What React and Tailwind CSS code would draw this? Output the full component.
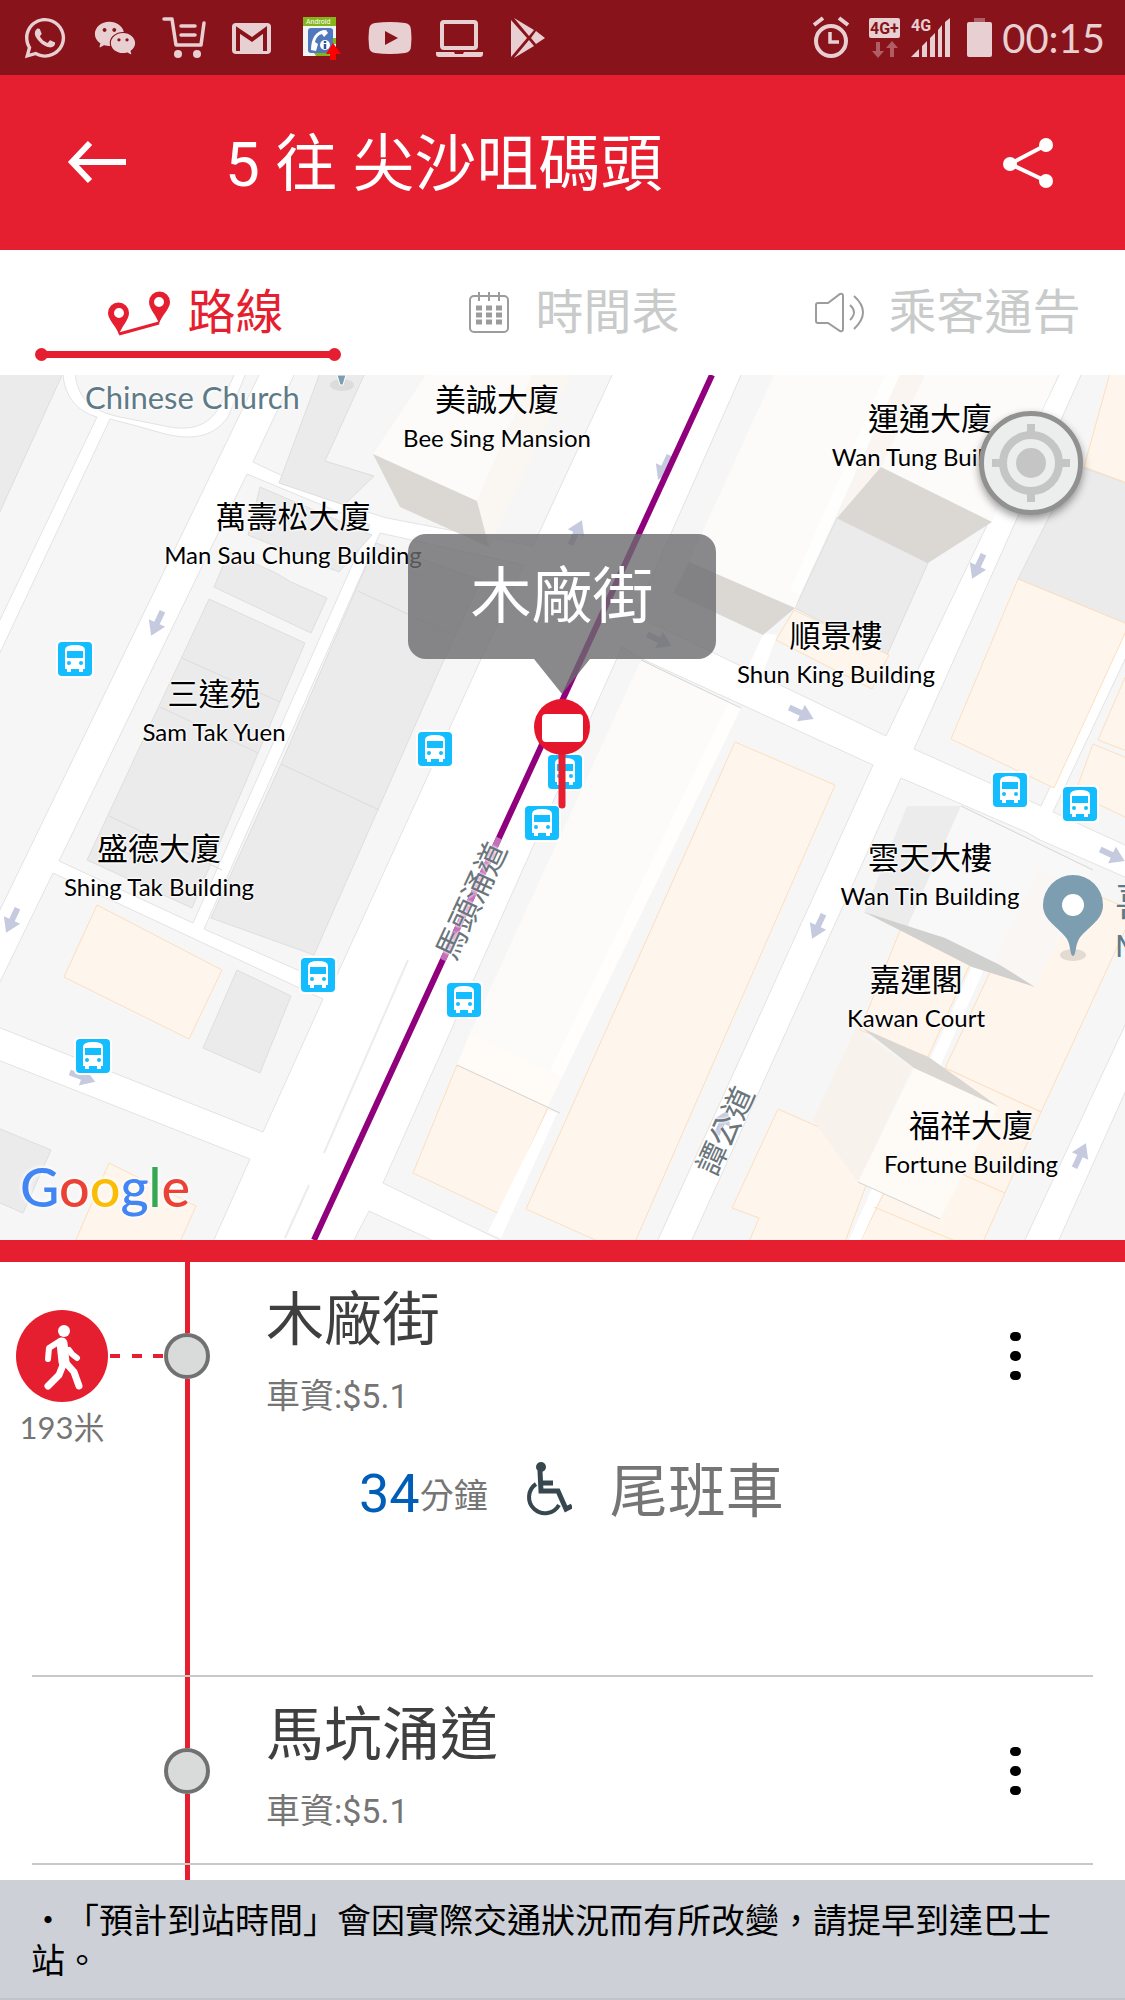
import { useState } from 'react';
import { FaWhatsapp } from 'react-icons/fa';
import { AiFillWechat } from 'react-icons/ai';

// fill / outline pairs used by the map polygons
const GROUND = { fill: '#f6f6f6', stroke: '#e3e3e3' };
const GREY = { fill: '#ebebeb', stroke: '#dedede' };
const PEACH = { fill: '#fef5ec', stroke: '#fddfbd' };

const blocks = [
  'M-2,-2 L63,-2 C64,20 76,36 97,42 L-2,249Z',
  'M75,-2 C78,25 92,36 120,42 L160,50 C200,60 215,45 225,20 L235,-2Z',
  'M110,44 L133,50 L158,57 C195,68 215,60 228,42 L246,-2 L260,-2 L-2,539 L-2,282Z',
  'M295,-2 L613,-2 L533,171 L387,143 L344,130 L253,87Z',
  'M247,99 L370,150 L193,548 L59,486Z',
  'M380,158 L524,190 L337,600 L300,596 L204,554Z',
  'M53,498 L323,624 L263,757 L-2,652 L-2,611Z',
  'M-2,685 L250,784 L213,867 L-2,867Z',
  'M742,-2 L1060,-2 L886,361 L635,240Z',
  'M1082,-2 L1127,-2 L1127,250 L1041,431 L914,374Z',
  'M1127,280 L1053,437 L1127,471Z',
  'M901,403 L1028,458 L1040,465 L1127,503 L1127,646 L1024,867 L691,867Z',
  'M1127,713 L1127,867 L1058,867Z',
  'M622,272 L640,283 L873,390 L657,867 L504,867 L383,808Z',
  'M369,836 L436,867 L353,867Z',
];

const greyBuildings = [
  'M-2,-2 L63,-2 L-2,141Z',
  'M320,-2 L365,-2 L325,86 L374,101 L344,130 L279,108Z',
  'M260,112 L372,160 L339,197 L248,160Z',
  'M229,177 L276,198 L291,207 L327,223 L311,258 L214,212Z',
  'M209,224 L305,268 L192,533 L87,485Z',
  'M376,168 L481,205 L443,287 L314,580 L211,543 L281,389Z',
  'M237,595 L291,621 L260,698 L203,673Z',
  'M-2,753 L51,775 L23,838 L-2,827Z',
  'M837,143 L928,188 L887,280 L795,233Z',
  'M1075,90 L1127,108 L1127,249 L1018,204Z',
];

const peachBuildings = [
  'M97,530 L222,595 L189,664 L64,602Z',
  'M109,788 L196,831 L180,867 L75,867Z',
  'M794,235 L889,280 L872,314 L776,265Z',
  'M1110,-2 L1127,-2 L1127,108 L1084,92Z',
  'M1018,204 L1127,249 L1127,254 L1054,413 L951,364Z',
  'M1127,298 L1098,365 L1127,376Z',
  'M1093,369 L1127,383 L1127,443 L1075,418Z',
  'M457,690 L548,732 L500,839 L413,798Z',
  'M735,367 L835,410 L635,867 L600,867 L526,834Z',
  'M901,553 L971,587 L928,682 L860,655Z',
  'M1038,495 L1127,533 L1127,551 L1041,737 L945,693Z',
  'M945,693 L1041,737 L983,867 L860,867Z',
  'M778,734 L878,778 L845,867 L749,867 L759,843 L732,833Z',
];

// tall buildings are drawn as a pale roof plus a darker side
const roofs = [
  { d: 'M426,0 L532,0 L477,126 L373,79Z', fill: '#fcfbf9' },
  { d: 'M532,0 L571,0 L489,172 L477,126Z', fill: '#faf6f1' },
  { d: 'M774,0 L885,0 L795,233 L689,187Z', fill: '#fcfbf9' },
  { d: 'M885,0 L900,0 L800,220 L790,215Z', fill: '#fefefd' },
  { d: 'M920,0 L1058,0 L992,147 L881,92Z', fill: '#fcfbf9' },
  { d: 'M900,0 L925,0 L881,92 L837,143Z', fill: '#faf5f0' },
  { d: 'M641,285 L741,333 L562,702 L470,658Z', fill: '#fcfbf9' },
  { d: 'M470,658 L562,702 L548,732 L457,690Z', fill: '#fffbf6' },
  { d: 'M729,326 L741,333 L562,702 L550,696Z', fill: '#fffefc' },
  { d: 'M907,431 L961,431 L908,553 L864,538Z', fill: '#ececec' },
  { d: 'M961,431 L1093,495 L1035,612 L908,550Z', fill: '#f8f8f8' },
  { d: 'M1038,495 L1078,514 L1035,612 L990,590Z', fill: '#faf6f3' },
  { d: 'M856,653 L912,693 L858,807 L813,745Z', fill: '#f8f2ed' },
  { d: 'M914,693 L998,732 L940,844 L858,807Z', fill: '#fefaf6' },
];

const shades = [
  { d: 'M373,79 L477,126 L489,172 L400,132Z', fill: '#dbd8d4' },
  { d: 'M881,92 L992,147 L928,188 L837,143Z', fill: '#dbd8d4' },
  { d: 'M689,187 L795,233 L763,260 L673,218Z', fill: '#dbd8d4' },
  { d: 'M864,537 L945,563 L1000,590 L1035,612 L972,592Z', fill: '#d0d0cf' },
  { d: 'M862,653 L930,683 L999,732 L914,693Z', fill: '#dad6d1' },
];

const arrows = [
  [157, 248, 115],
  [12, 545, 115],
  [664, 92, 115],
  [576, 158, -65],
  [659, 265, 25],
  [978, 191, 115],
  [801, 338, 25],
  [1112, 480, 25],
  [818, 551, 115],
  [1080, 781, -65],
  [82, 702, 20],
  [722, 748, -65],
];

const busStops = [
  [75, 284],
  [435, 374],
  [565, 397],
  [542, 448],
  [318, 600],
  [464, 625],
  [93, 681],
  [1010, 415],
  [1080, 429],
];

const labels = [
  { x: 497, y: 6, zh: '美誠大廈', en: 'Bee Sing Mansion' },
  { x: 293, y: 123, zh: '萬壽松大廈', en: 'Man Sau Chung Building' },
  { x: 930, y: 25, zh: '運通大廈', en: 'Wan Tung Building' },
  { x: 836, y: 242, zh: '順景樓', en: 'Shun King Building' },
  { x: 214, y: 300, zh: '三達苑', en: 'Sam Tak Yuen' },
  { x: 159, y: 455, zh: '盛德大廈', en: 'Shing Tak Building' },
  { x: 930, y: 464, zh: '雲天大樓', en: 'Wan Tin Building' },
  { x: 916, y: 586, zh: '嘉運閣', en: 'Kawan Court' },
  { x: 971, y: 732, zh: '福祥大廈', en: 'Fortune Building' },
];

const streets = [
  { x: 472, y: 526, name: '馬頭涌道' },
  { x: 726, y: 756, name: '譚公道' },
];

const stops = [
  { id: 1, name: '木廠街', fare: '5.1', walk: '193米', eta: 34, remark: '尾班車' },
  { id: 2, name: '馬坑涌道', fare: '5.1' },
];

const StatusBar = () => (
  <div className="flex h-[75px] items-center justify-between bg-[#88131b] pl-[22px] pr-5 text-[#e8d0d2]">
    <div className="flex items-center gap-6">
      <FaWhatsapp size={46} />
      <AiFillWechat size={46} />
      <svg width="44" height="44" viewBox="0 0 44 44" fill="none" stroke="currentColor" strokeWidth="3.5" strokeLinecap="round" strokeLinejoin="round">
        <path d="M2 3h8l4 26h25l3-22" />
        <path d="M19 10h14M19 19h14" />
        <circle cx="16" cy="38" r="4" fill="currentColor" stroke="none" />
        <circle cx="35" cy="38" r="4" fill="currentColor" stroke="none" />
      </svg>
      <svg width="44" height="44" viewBox="0 0 44 44">
        <rect x="2" y="7" width="39" height="31" rx="4" fill="currentColor" />
        <path d="M8 35V14l14 9.500L35 14v21" fill="none" stroke="#88131b" strokeWidth="4" />
      </svg>
      <svg width="46" height="44" viewBox="0 0 46 44">
        <rect x="5" y="1" width="33" height="39" fill="#f4f4f4" />
        <rect x="5" y="1" width="33" height="9" fill="#84b61c" />
        <path d="M16 37h14l4 3H18zM35 22h3v6h-3z" fill="#84b61c" />
        <text x="8" y="8" fontSize="7" fill="#fff" fontFamily="Roboto">Android</text>
        <rect x="10" y="12" width="25" height="25" rx="3" fill="#5178bd" />
        <path d="M28 14c-10 0-15 8-15 20l5 1 2-7-3-2c1-4 3-7 7-8l2 3 4-4z" fill="#fff" />
        <circle cx="27" cy="29" r="5" fill="#fff" />
        <path d="M27 28v5M27 25v2" stroke="#2f55a0" strokeWidth="2.5" />
        <path d="M35 27l8 11h-5v6h-6v-6h-4z" fill="#f00" />
      </svg>
      <svg width="44" height="44" viewBox="0 0 44 44">
        <path d="M7 7q15-2 30 0 6 1 6 7 1 8 0 16 0 6-6 7-15 2-30 0-6-1-6-7-1-8 0-16 0-6 6-7z" fill="currentColor" />
        <path d="M17 15l13 7-13 7z" fill="#88131b" />
      </svg>
      <svg width="48" height="44" viewBox="0 0 48 44" fill="none" stroke="currentColor" strokeWidth="4">
        <rect x="6" y="6" width="34" height="26" rx="2" />
        <path d="M0 36h18l1 2h8l1-2h19v2q0 3-3 3H3q-3 0-3-3z" fill="currentColor" stroke="none" />
      </svg>
      <svg width="44" height="44" viewBox="0 0 44 44" fill="currentColor">
        <path d="M3 4l16 18L3 41zM6 2l20 12-5 6zM28 15l9 7-9 6-5-6zM21 24l5 6L6 42z" />
      </svg>
    </div>
    <div className="flex items-center">
      <svg width="183" height="44" viewBox="0 0 183 44" fill="currentColor">
        <circle cx="21" cy="25" r="15" fill="none" stroke="currentColor" strokeWidth="4" />
        <path d="M4 9l9-7M38 9l-9-7" stroke="currentColor" strokeWidth="4" />
        <path d="M20 16v10h9" fill="none" stroke="currentColor" strokeWidth="3.5" />
        <rect x="59" y="2" width="31" height="20" rx="2" />
        <text x="60" y="18" fontSize="16" fontWeight="700" fill="#88131b" fontFamily="Roboto">4G+</text>
        <path d="M66 26h4v9h4l-6 7-6-7h4zM80 41h4v-9h4l-6-7-6 7h4z" opacity=".4" />
        <text x="101" y="15" fontSize="16" fontWeight="700" fontFamily="Roboto">4G</text>
        <path d="M101 41l8-8v8zM112 30l5-5v16h-5zM120 22l5-5v24h-5zM128 14l4-5v32h-4zM135 6l5-4v39h-5z" />
        <rect x="157" y="6" width="25" height="35" rx="2" />
        <rect x="164" y="2" width="11" height="4" opacity=".4" />
      </svg>
      <span className="ml-[9px] font-[Lato] text-[40px] leading-[48px]">00:15</span>
    </div>
  </div>
);

const Header = () => (
  <header className="flex h-[175px] items-center bg-[#e51f30] pl-[67px] pr-[71px] text-white">
    <button type="button" aria-label="返回">
      <svg width="60" height="44" viewBox="0 0 60 44" fill="none" stroke="currentColor" strokeWidth="6">
        <path d="M59 21H6M23 2L5 21l18 19" />
      </svg>
    </button>
    <h1 className="ml-[98px] flex-1 pt-1 text-[62px] leading-[72px]">5 往 尖沙咀碼頭</h1>
    <button type="button" aria-label="分享">
      <svg width="52" height="52" viewBox="0 0 52 52" fill="currentColor">
        <path d="M44 8L8 27l36 17" fill="none" stroke="currentColor" strokeWidth="4" />
        <circle cx="8" cy="27" r="7" />
        <circle cx="44" cy="8" r="7" />
        <circle cx="44" cy="44" r="7" />
      </svg>
    </button>
  </header>
);

const RouteIcon = () => (
  <svg width="56" height="46" viewBox="3 0 56 46" className="overflow-visible">
    <path d="M11 44L51 33" stroke="currentColor" strokeWidth="3" />
    <path fillRule="evenodd" fill="currentColor" d="M11 45C9 37 0 30 0 23a10.500 10.500 0 0 1 21 0c0 7-8 14-10 22zM11 18a5 5 0 1 0 0 10 5 5 0 0 0 0-10z" />
    <path fillRule="evenodd" fill="currentColor" d="M51 34c-2-8-10-15-10-22a10.500 10.500 0 0 1 21 0c0 7-9 14-11 22zM51 7a5 5 0 1 0 0 10 5 5 0 0 0 0-10z" />
  </svg>
);

const CalendarIcon = () => (
  <svg width="50" height="42" viewBox="-2 0 50 42" className="text-[#9c9c9c]">
    <rect x="3" y="4" width="38" height="36" rx="4" fill="none" stroke="currentColor" strokeWidth="2" />
    <path d="M12 0v9M22 0v9M32 0v9" stroke="currentColor" strokeWidth="2" />
    <path d="M9 16h26M9 23h26M9 30h26" stroke="currentColor" strokeWidth="5" strokeDasharray="6 4" />
  </svg>
);

const SpeakerIcon = () => (
  <svg width="54" height="42" viewBox="0 0 54 42" fill="none" stroke="#9c9c9c" strokeWidth="2">
    <path d="M4 11h10L26 2q3-1 3 2v33q0 3-3 2L14 31H4q-2 0-2-2V13q0-2 2-2zM36 13q8 7 0 15M40 4q18 16 0 33" />
  </svg>
);

const tabs = [
  { key: 'route', label: '路線', Icon: RouteIcon },
  { key: 'timetable', label: '時間表', Icon: CalendarIcon },
  { key: 'notice', label: '乘客通告', Icon: SpeakerIcon },
];

const Tabs = () => {
  const [active, setActive] = useState('route');

  return (
    <nav className="grid h-[125px] grid-cols-3 bg-white">
      {tabs.map(({ key, label, Icon }) => (
        <button
          key={key}
          type="button"
          onClick={() => setActive(key)}
          className={`flex flex-col items-center pt-7 ${active === key ? 'text-[#e51f30]' : 'text-[#c9caca]'}`}
        >
          <span className="flex items-center gap-5 pl-5 text-[48px] leading-[70px] whitespace-nowrap">
            <Icon />
            {label}
          </span>
          {active === key && (
            <span className="flex w-[306px] items-center">
              <span className="size-[13px] rounded-full bg-[#e51f30]" />
              <span className="-mx-1 h-[7px] flex-1 bg-[#e51f30]" />
              <span className="size-[13px] rounded-full bg-[#e51f30]" />
            </span>
          )}
        </button>
      ))}
    </nav>
  );
};

const BusStop = ({ x, y }) => (
  <g transform={`translate(${x - 17} ${y - 17})`}>
    <rect x="-2" y="-2" width="38" height="38" rx="5" fill="#fff" />
    <rect width="34" height="34" rx="4" fill="#13bdff" />
    <path d="M7 8q0-5 10-5t10 5v19h-2v3h-4v-3h-8v3H9v-3H7z" fill="#fff" />
    <rect x="9" y="9" width="16" height="7" fill="#13bdff" />
    <circle cx="11" cy="21" r="2" fill="#13bdff" />
    <circle cx="23" cy="21" r="2" fill="#13bdff" />
  </g>
);

const Map = () => (
  <section className="relative h-[865px] overflow-hidden bg-white">
    <svg className="block h-full w-full" viewBox="0 0 1125 865" preserveAspectRatio="xMidYMid slice">
      {blocks.map((d) => <path key={d} d={d} {...GROUND} />)}
      {greyBuildings.map((d) => <path key={d} d={d} {...GREY} />)}
      {peachBuildings.map((d) => <path key={d} d={d} {...PEACH} />)}
      <path d="M748,292 L763,298 L777,260 L764,258Z M548,735 L557,738 L501,863 L488,857Z M976,583 L986,590 L861,865 L849,865Z" fill="#fff" />
      <path d="M182,283 L280,327 M160,332 L258,378 M109,441 L222,495 M281,389 L379,435 M358,216 L453,260" stroke="#dcdcdc" />
      <path d="M874,832 L953,865 M903,773 L1005,818" stroke="#fddfbd" />
      <path d="M408,585 L324,778 M309,810 L285,863" stroke="#ececec" strokeWidth="2" />
      {roofs.map((s) => <path key={s.d} {...s} />)}
      {shades.map((s) => <path key={s.d} {...s} />)}
      <path d="M641,285 L741,333 M961,431 L1093,495 M457,690 L560,738 M858,807 L940,844" stroke="#d5d5d3" />
      {arrows.map(([x, y, angle]) => (
        <path key={`${x}-${y}`} transform={`translate(${x} ${y}) rotate(${angle})`} d="M-13-3H0v-6L14 0 0 9V3h-13z" fill="#c6cadf" />
      ))}
      <path d="M712,0 L314,865" stroke="#90007c" strokeWidth="6" />
      <path d="M499,463 L443,585" stroke="#c46fb9" strokeWidth="6" />
      {busStops.map(([x, y]) => <BusStop key={`${x}-${y}`} x={x} y={y} />)}

      {/* places of worship */}
      <ellipse cx="342" cy="10" rx="12" ry="6" fill="#dcdcdc" />
      <path d="M337 0h9l-3 10h-3z" fill="#7c9eb0" stroke="#fff" />
      <ellipse cx="1073" cy="580" rx="13" ry="6" fill="#e3dad1" />
      <path d="M1073 581c-3 0-2-10-6-17-8-12-24-18-24-34a30 30 0 0 1 60 0c0 16-16 22-24 34-4 7-3 17-6 17z" fill="#7c9eb0" />
      <circle cx="1073" cy="530" r="11" fill="#fff" />

      {/* selected stop */}
      <path d="M562 375v55" stroke="#e51f30" strokeWidth="7" strokeLinecap="round" />
      <circle cx="562" cy="352" r="28" fill="#e5162b" />
      <rect x="542" y="339" width="41" height="28" rx="4" fill="#fff" />
    </svg>

    {labels.map((l) => (
      <div
        key={l.zh}
        style={{ left: l.x, top: l.y }}
        className="absolute -translate-x-1/2 text-center whitespace-nowrap text-black [text-shadow:0_0_3px_#fff,0_0_3px_#fff,0_0_3px_#fff]"
      >
        <p className="text-[31px] leading-[39px]">{l.zh}</p>
        <p className="font-[Lato] text-[24px] leading-9">{l.en}</p>
      </div>
    ))}
    {streets.map((s) => (
      <p
        key={s.name}
        style={{ left: s.x, top: s.y }}
        className="absolute -translate-1/2 -rotate-65 text-[31px] leading-[39px] whitespace-nowrap text-[#6b757b] [text-shadow:0_0_3px_#fff,0_0_3px_#fff]"
      >
        {s.name}
      </p>
    ))}
    <p className="absolute top-0 left-[85px] font-[Lato] text-[31px] leading-[44px] text-[#5f7a87] [text-shadow:0_0_3px_#fff,0_0_3px_#fff]">
      Chinese Church
    </p>
    <div className="absolute top-[507px] left-[1115px] w-[120px] text-[#5f7a87]">
      <p className="text-[39px] leading-[40px]">喜</p>
      <p className="font-[Lato] text-[31px] leading-[46px]">M</p>
    </div>

    <p className="absolute bottom-[21px] left-[20px] font-[Lato] text-[54px] leading-[64px] font-medium [text-shadow:0_0_5px_#fff,0_0_5px_#fff]">
      <span className="text-[#4285f4]">G</span>
      <span className="text-[#ea4335]">o</span>
      <span className="text-[#fbbc05]">o</span>
      <span className="text-[#4285f4]">g</span>
      <span className="text-[#34a853]">l</span>
      <span className="text-[#ea4335]">e</span>
    </p>

    <div className="absolute top-[159px] left-[408px] flex w-[308px] flex-col items-center">
      <p className="w-full rounded-[18px] bg-[#6b6c6e]/80 pt-0.5 text-center text-[61px] leading-[123px] text-white">木廠街</p>
      <svg width="56" height="35" viewBox="0 0 56 35">
        <path d="M0 0h56L28 35z" fill="#6b6c6e" fillOpacity=".8" />
      </svg>
    </div>

    <button
      type="button"
      aria-label="我的位置"
      className="absolute top-9 right-[42px] size-[104px] rounded-full border-[5px] border-[#919191] bg-[#eceeed] shadow-[0_4px_8px_rgba(0,0,0,0.4)]"
    >
      <svg viewBox="0 0 94 94" fill="none" stroke="#c5c5c5">
        <circle cx="47" cy="47" r="28" strokeWidth="8" />
        <circle cx="47" cy="47" r="15" fill="#c5c5c5" stroke="none" />
        <path d="M47 8v12M47 74v12M8 47h12M74 47h12" strokeWidth="8" />
      </svg>
    </button>
  </section>
);

const WalkIcon = () => (
  <svg viewBox="0 0 92 92" fill="none" stroke="currentColor" strokeLinecap="round" strokeLinejoin="round">
    <circle cx="48" cy="21" r="6" fill="currentColor" stroke="none" />
    <path d="M46 33l2 19" strokeWidth="11" />
    <path d="M44 31l-11 7-1 11M53 40l3 4 5 4" strokeWidth="6" />
    <path d="M47 55l-4 10-11 11M50 53l8 9 5 14" strokeWidth="7" />
  </svg>
);

const WheelchairIcon = () => (
  <svg width="46" height="56" viewBox="0 0 46 56" fill="none" stroke="#37474f" strokeWidth="5">
    <circle cx="15" cy="5" r="5" fill="#37474f" stroke="none" />
    <path d="M14 9l1 20h17l8 18 6-3M15 21h12" />
    <path d="M10 22a16 16 0 1 0 23 21" strokeWidth="4" />
  </svg>
);

const Stop = ({ stop }) => (
  <li>
    <div className="flex items-start">
      <div className="flex w-[164px] shrink-0 items-start pl-4">
        {stop.walk && (
          <>
            <div className="flex w-[92px] flex-col items-center pt-12">
              <span className="size-[92px] rounded-full bg-[#e51f30] text-white">
                <WalkIcon />
              </span>
              <span className="mt-2 font-[Lato,'Noto_Sans_CJK_TC',sans-serif] text-[31px] leading-[34px] text-[#757575]">{stop.walk}</span>
            </div>
            <div className="mt-[92px] flex flex-1 justify-between pl-0.5 pr-px">
              <span className="h-1 w-[10px] bg-[#e51f30]" />
              <span className="h-1 w-[10px] bg-[#e51f30]" />
              <span className="h-1 w-[10px] bg-[#e51f30]" />
            </div>
          </>
        )}
      </div>
      <div className="flex w-[46px] shrink-0 flex-col items-center self-stretch">
        <span className="h-[71px] w-[5px] bg-[#e51f30]" />
        <span className="size-[46px] rounded-full border-4 border-[#717171] bg-[#d9dbda]" />
        <span className="w-[5px] flex-1 bg-[#e51f30]" />
      </div>
      <div className="ml-14 flex-1 pt-[22px] pb-8">
        <h2 className="text-[58px] leading-[72px] text-[#3f3f3f]">{stop.name}</h2>
        <p className="mt-5 text-[34px] leading-10 text-[#757575]">車資:${stop.fare}</p>
        {stop.eta && (
          <div className="flex h-[227px] items-start gap-[38px] pt-[46px] pl-[93px] text-[#757575]">
            <p className="flex items-center text-[34px] leading-[60px]">
              <span className="text-[54px] text-[#005eb8]">{stop.eta}</span>
              <span className="pt-1">分鐘</span>
            </p>
            <WheelchairIcon />
            <p className="text-[58px] leading-[60px]">{stop.remark}</p>
          </div>
        )}
      </div>
      <button type="button" aria-label="更多" className="mt-[70px] mr-[86px] flex size-12 flex-col items-center justify-center gap-2.5">
        <span className="size-[11px] rounded-full bg-black" />
        <span className="size-[11px] rounded-full bg-black" />
        <span className="size-[11px] rounded-full bg-black" />
      </button>
    </div>
    <div className="mx-8 h-0.5 bg-[#c8c8c8]" />
  </li>
);

const App = () => (
  <div lang="zh-Hant" className="flex min-h-screen flex-col bg-white font-[Roboto,'Noto_Sans_CJK_TC',sans-serif]">
    <StatusBar />
    <Header />
    <Tabs />
    <Map />
    <main className="border-t-[22px] border-[#e51f30]">
      <ul>
        {stops.map((stop) => (
          <Stop key={stop.id} stop={stop} />
        ))}
      </ul>
      <div className="flex w-[374px] justify-center">
        <span className="h-[15px] w-[5px] bg-[#e51f30]" />
      </div>
    </main>
    <footer className="flex-1 border-b-2 border-[#c0c3c8] bg-[#cdd0d6] px-[31px] pt-[21px] pb-4 text-[34px] leading-10 text-black [text-spacing-trim:space-all]">
      ・「預計到站時間」會因實際交通狀況而有所改變，請提早到達巴士站。
    </footer>
  </div>
);

export default App;
